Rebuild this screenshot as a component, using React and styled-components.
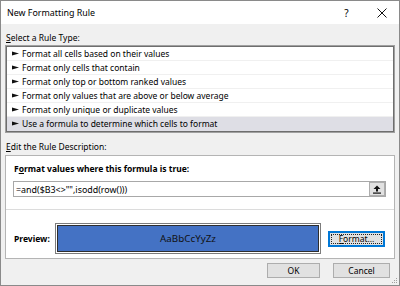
import React from 'react';
import styled, { createGlobalStyle } from 'styled-components';

const GlobalStyle = createGlobalStyle`
  html, body {
    margin: 0;
    padding: 0;
    background: #fff;
  }
  body {
    font-family: "Noto Sans", "Liberation Sans", sans-serif;
  }
`;

const Window = styled.div`
  position: relative;
  box-sizing: border-box;
  width: 400px;
  height: 286px;
  border: 1px solid #8a8a8a;
  background: #f0f0f0;
  display: flex;
  flex-direction: column;
  color: #000;
  font-size: 8.5px;
`;

const TitleBar = styled.div`
  height: 23px;
  background: #fff;
  display: flex;
  align-items: center;
  padding-left: 6px;
`;

const Title = styled.div`
  flex: 1;
  font-size: 8.9px;
`;

const TitleButton = styled.div`
  width: 35px;
  height: 23px;
  display: flex;
  align-items: center;
  justify-content: center;
  font-size: 10px;
`;

const Body = styled.div`
  display: flex;
  flex-direction: column;
  padding: 0 4px;
`;

const SectionLabel = styled.div`
  margin-top: 7px;
  padding-left: 1px;
  line-height: 14px;
`;

const Key = styled.span`
  text-decoration: underline;
  text-underline-offset: 1px;
`;

const RuleList = styled.div`
  height: 88px;
  box-sizing: border-box;
  background: #fff;
  border: 1px solid #a0a0a0;
  box-shadow: inset 0 0 0 1px #6e6e6e;
  padding: 1px;
  display: flex;
  flex-direction: column;
`;

const RuleRow = styled.div`
  box-sizing: border-box;
  height: 14px;
  display: flex;
  align-items: center;
  gap: 3px;
  padding-left: 5px;
  border-bottom: 1px solid ${(p) => (p.$last ? 'transparent' : '#f0f0f0')};
  background: ${(p) => (p.$selected ? '#dedee5' : 'transparent')};
`;

const GroupBox = styled.div`
  margin-top: 1px;
  background: #fff;
  border: 1px solid #b4b4b4;
  padding: 6px 8px 4px 7px;
  display: flex;
  flex-direction: column;
`;

const Heading = styled.div`
  font-weight: 700;
  line-height: 14px;
  padding-left: 1px;
`;

const FormulaInput = styled.div`
  margin-top: 5px;
  height: 16px;
  box-sizing: border-box;
  border: 1px solid #a8a8a8;
  display: flex;
  align-items: center;
  padding-left: 2px;
`;

const FormulaText = styled.div`
  flex: 1;
  font-size: 8.9px;
`;

const CollapseButton = styled.div`
  width: 16px;
  height: 14px;
  box-sizing: border-box;
  background: #e1e1e1;
  border: 1px solid #adadad;
  display: flex;
  align-items: center;
  justify-content: center;
`;

const Divider = styled.div`
  height: 1px;
  margin: 12px -8px 0 -7px;
  background: #dcdcdc;
`;

const PreviewRow = styled.div`
  margin-top: 13px;
  display: flex;
  align-items: center;
`;

const PreviewLabel = styled.div`
  width: 41px;
  padding-left: 1px;
  font-weight: 700;
`;

const PreviewFrame = styled.div`
  width: 266px;
  height: 31px;
  box-sizing: border-box;
  border: 1px solid #7c7c7c;
  padding: 1px;
  background: #fff;
  display: flex;
`;

const PreviewSwatch = styled.div`
  flex: 1;
  border: 1px solid #2e2e2e;
  background: #4472c4;
  display: flex;
  align-items: center;
  justify-content: center;
  font-size: 9.8px;
  color: #111;
`;

const Button = styled.div`
  box-sizing: border-box;
  width: ${(p) => p.$width}px;
  height: ${(p) => p.$height || 15}px;
  background: #e1e1e1;
  border: 1px solid ${(p) => (p.$focused ? '#0078d7' : '#adadad')};
  box-shadow: ${(p) => (p.$focused ? 'inset 0 0 0 1px #0078d7' : 'none')};
  display: flex;
  align-items: center;
  justify-content: center;
  padding: ${(p) => (p.$focused ? '2px' : '0')};
`;

const FocusRect = styled.div`
  flex: 1;
  align-self: stretch;
  display: flex;
  align-items: center;
  justify-content: center;
  outline: 1px dotted #222;
  outline-offset: -1px;
`;

const FormatButton = styled(Button)`
  margin-left: 7px;
`;

const Footer = styled.div`
  display: flex;
  justify-content: flex-end;
  gap: 13px;
  margin-top: 4px;
  padding-right: 5px;
`;

const Grip = styled.svg`
  position: absolute;
  right: 1px;
  bottom: 1px;
`;

const rules = [
  'Format all cells based on their values',
  'Format only cells that contain',
  'Format only top or bottom ranked values',
  'Format only values that are above or below average',
  'Format only unique or duplicate values',
  'Use a formula to determine which cells to format',
];

const Bullet = () => (
  <svg width="7" height="5" viewBox="0 0 7 5">
    <polygon points="0,0.6 7,2.5 0,4.4" fill="#111" />
  </svg>
);

export default function App() {
  return (
    <>
      <GlobalStyle />
      <Window>
        <TitleBar>
          <Title>New Formatting Rule</Title>
          <TitleButton>?</TitleButton>
          <TitleButton>
            <svg width="10" height="10" viewBox="0 0 10 10">
              <path d="M0.5 0.5 L9.5 9.5 M9.5 0.5 L0.5 9.5" stroke="#111" strokeWidth="1" />
            </svg>
          </TitleButton>
        </TitleBar>
        <Body>
          <SectionLabel>
            <Key>S</Key>elect a Rule Type:
          </SectionLabel>
          <RuleList>
            {rules.map((r, i) => (
              <RuleRow key={r} $selected={i === rules.length - 1} $last={i === rules.length - 1}>
                <Bullet />
                {r}
              </RuleRow>
            ))}
          </RuleList>
          <SectionLabel>
            <Key>E</Key>dit the Rule Description:
          </SectionLabel>
          <GroupBox>
            <Heading>
              F<Key>o</Key>rmat values where this formula is true:
            </Heading>
            <FormulaInput>
              <FormulaText>=and($B3&lt;&gt;"",isodd(row()))</FormulaText>
              <CollapseButton>
                <svg width="8" height="9" viewBox="0 0 8 9">
                  <path d="M4 0.5 L7.5 4 L5 4 L5 6.5 L3 6.5 L3 4 L0.5 4 Z" fill="#111" />
                  <rect x="0" y="7.5" width="8" height="1.2" fill="#111" />
                </svg>
              </CollapseButton>
            </FormulaInput>
            <Divider />
            <PreviewRow>
              <PreviewLabel>Preview:</PreviewLabel>
              <PreviewFrame>
                <PreviewSwatch>AaBbCcYyZz</PreviewSwatch>
              </PreviewFrame>
              <FormatButton $width={57} $height={16} $focused>
                <FocusRect>
                  <span>
                    <Key>F</Key>ormat...
                  </span>
                </FocusRect>
              </FormatButton>
            </PreviewRow>
          </GroupBox>
          <Footer>
            <Button $width={53}>OK</Button>
            <Button $width={57}>Cancel</Button>
          </Footer>
        </Body>
        <Grip width="7" height="7" viewBox="0 0 7 7">
          <rect x="5" y="1" width="1" height="1" fill="#a0a0a0" />
          <rect x="3" y="3" width="1" height="1" fill="#a0a0a0" />
          <rect x="5" y="3" width="1" height="1" fill="#a0a0a0" />
          <rect x="1" y="5" width="1" height="1" fill="#a0a0a0" />
          <rect x="3" y="5" width="1" height="1" fill="#a0a0a0" />
          <rect x="5" y="5" width="1" height="1" fill="#a0a0a0" />
        </Grip>
      </Window>
    </>
  );
}
